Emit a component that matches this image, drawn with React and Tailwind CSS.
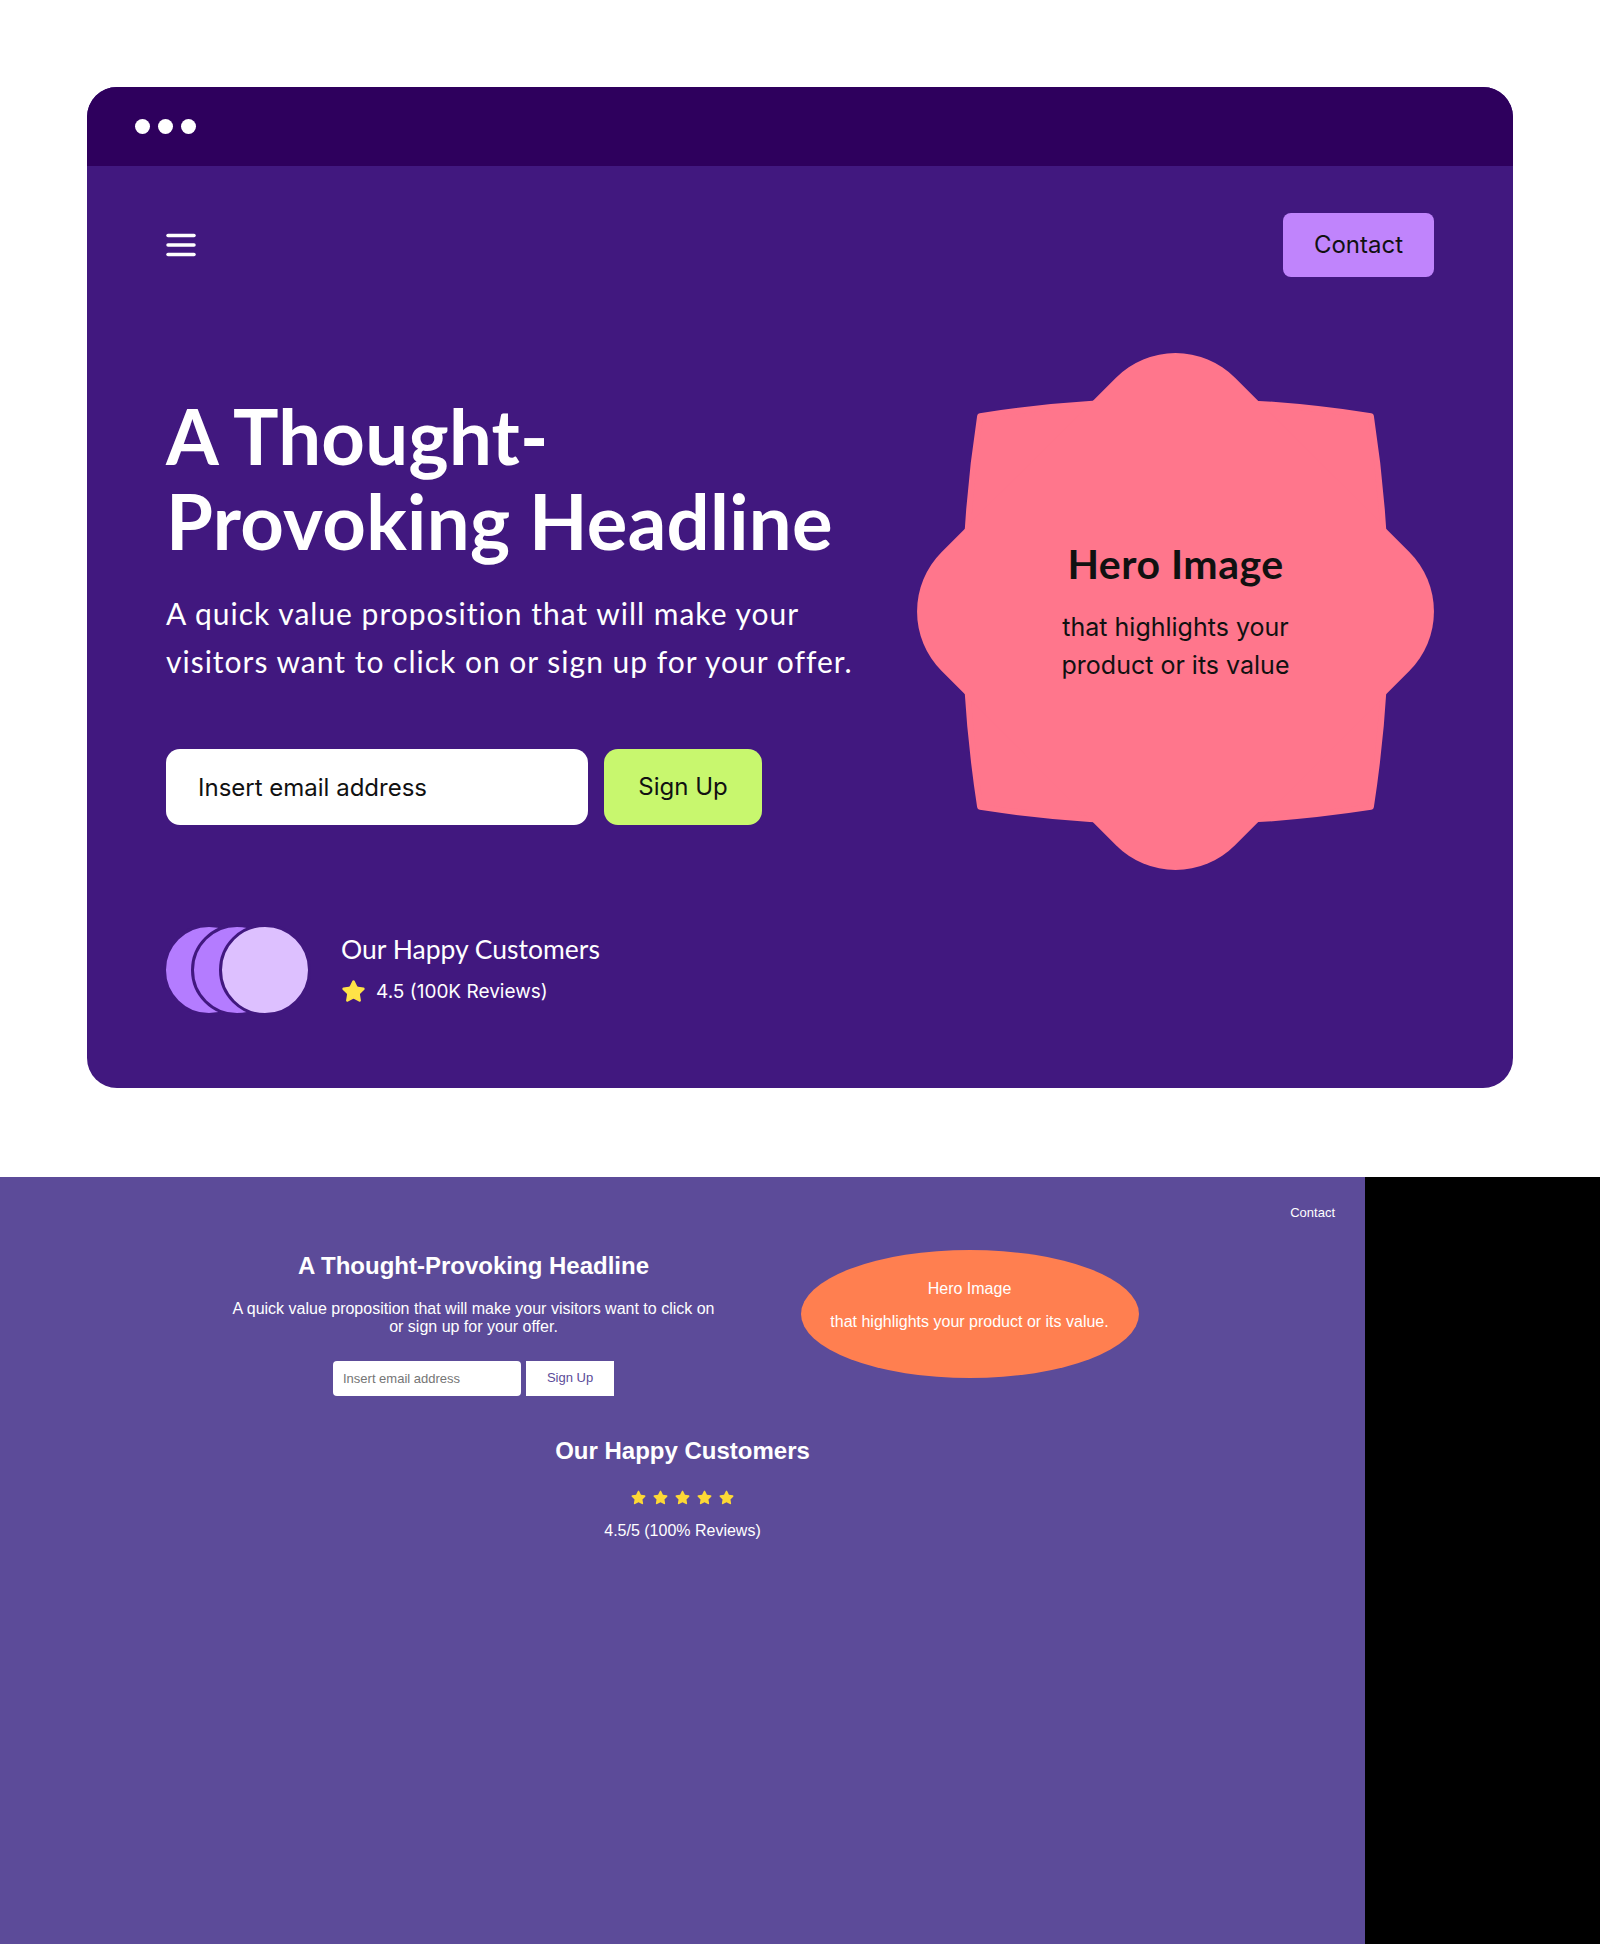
import { Star } from "lucide-react";
import { FaStar } from "react-icons/fa";

const lato = "font-[family-name:Lato,sans-serif]";
const inter = "font-[family-name:Inter,sans-serif]";
const arial = "font-[family-name:'Liberation_Sans',Arial,sans-serif]";

function Flower() {
  return (
    <div className="relative w-[517px] h-[517px] shrink-0">
      <svg viewBox="-258 -258 516 516" className="w-full h-full">
        <path
          d="M -195 -195 Q 0 -225 195 -195 Q 225 0 195 195 Q 0 225 -195 195 Q -225 0 -195 -195 Z"
          fill="#FF768C"
          stroke="#FF768C"
          strokeWidth="6"
          strokeLinejoin="round"
        />
        <rect x="-207" y="-207" width="414" height="414" rx="84" transform="rotate(45)" fill="#FF768C" />
      </svg>
      {/* label on top of the shape */}
      <div className="absolute inset-0 flex flex-col items-center justify-center text-center text-[#111]">
        <h2 className={`${lato} text-[41px] font-bold leading-[1.2] tracking-[0.5px]`}>Hero Image</h2>
        <p className={`${inter} text-[25px] leading-[38px] mt-[19px]`}>
          that highlights your
          <br />
          product or its value
        </p>
      </div>
    </div>
  );
}

function Mockup() {
  return (
    <div className="bg-white px-[87px] pt-[87px] pb-[89px]">
      <div className="rounded-[30px] overflow-hidden bg-[#41187F]">
        {/* window bar */}
        <div className="h-[79px] bg-[#2E005D] flex items-center pl-[48px] gap-[8px]">
          <span className="w-[15px] h-[15px] rounded-full bg-white" />
          <span className="w-[15px] h-[15px] rounded-full bg-white" />
          <span className="w-[15px] h-[15px] rounded-full bg-white" />
        </div>

        <div className="px-[79px] pt-[47px] pb-[72px]">
          {/* nav */}
          <div className="flex items-center justify-between">
            <svg width="30" height="24" viewBox="0 0 30 24">
              <line x1="2" y1="2.5" x2="28" y2="2.5" stroke="white" strokeWidth="3.5" strokeLinecap="round" />
              <line x1="2" y1="12" x2="28" y2="12" stroke="white" strokeWidth="3.5" strokeLinecap="round" />
              <line x1="2" y1="21.5" x2="28" y2="21.5" stroke="white" strokeWidth="3.5" strokeLinecap="round" />
            </svg>
            <button className={`${inter} w-[151px] h-[64px] rounded-[8px] bg-[#C084FC] text-[24px] text-[#111]`}>
              Contact
            </button>
          </div>

          {/* hero */}
          <div className="mt-[76px] flex items-start justify-between">
            <div className="flex-1 pt-[40px]">
              <h1 className={`${lato} text-[76px] leading-[85px] font-bold tracking-[0.3px] text-white`}>
                A Thought-
                <br />
                Provoking Headline
              </h1>
              <p className={`${lato} mt-[26px] text-[30px] leading-[48px] font-normal tracking-[1px] text-white`}>
                A quick value proposition that will make your
                <br />
                visitors want to click on or sign up for your offer.
              </p>
              <form className="mt-[64px] flex gap-[16px]" onSubmit={(e) => e.preventDefault()}>
                <input
                  type="email"
                  placeholder="Insert email address"
                  className={`${inter} w-[422px] h-[76px] rounded-[14px] bg-white px-[32px] text-[24px] text-[#111] placeholder:text-[#111] outline-none`}
                />
                <button className={`${inter} w-[158px] h-[76px] rounded-[14px] bg-[#C8F76E] text-[24px] text-[#111]`}>
                  Sign Up
                </button>
              </form>
            </div>
            <Flower />
          </div>

          {/* social proof */}
          <div className="mt-[54px] flex items-center gap-[30px]">
            <div className="flex -ml-[3px]">
              <span className="w-[92px] h-[92px] rounded-full bg-[#B47CFF] border-[3px] border-[#41187F]" />
              <span className="w-[92px] h-[92px] rounded-full bg-[#B47CFF] border-[3px] border-[#41187F] -ml-[64px]" />
              <span className="w-[92px] h-[92px] rounded-full bg-[#DDC0FF] border-[3px] border-[#41187F] -ml-[64px]" />
            </div>
            <div>
              <p className={`${lato} text-[26.5px] leading-[1.2] font-normal text-white`}>Our Happy Customers</p>
              <div className="mt-[12px] flex items-center gap-[10px]">
                <Star size={25} fill="#FFE347" color="#FFE347" strokeWidth={1.5} />
                <span className={`${inter} text-[19px] text-white`}>4.5 (100K Reviews)</span>
              </div>
            </div>
          </div>
        </div>
      </div>
    </div>
  );
}

function LiveSection() {
  return (
    <div className={`${arial} flex h-[767px] leading-[1.15]`}>
      <div className="w-[1365px] bg-[#5C4B99] text-white">
        <div className="flex justify-end pr-[30px] pt-[29px]">
          <a className="text-[13px] leading-[1.15]">Contact</a>
        </div>

        <div className="mt-[29px] flex justify-center items-start gap-[80px]">
          <div className="w-[494px] pt-[2px] text-center">
            <h2 className="text-[24px] leading-[1.15] font-bold">A Thought-Provoking Headline</h2>
            <p className="mt-[20px] text-[16px] leading-[1.15]">
              A quick value proposition that will make your visitors want to click on or sign up for your offer.
            </p>
            <div className="mt-[25px] flex justify-center gap-[5px]">
              <input
                type="email"
                placeholder="Insert email address"
                className="w-[188px] h-[35px] rounded-[4px] bg-white px-[10px] text-[13px] text-[#333] placeholder:text-[#757575] outline-none"
              />
              <button className="w-[88px] h-[35px] bg-white text-[13px] text-[#5C4B99]">Sign Up</button>
            </div>
          </div>
          <div className="w-[338px] h-[128px] rounded-[50%] bg-[#FF7F50] flex flex-col items-center justify-center pb-[17px] text-[16px] leading-[1.15]">
            <p>Hero Image</p>
            <p className="mt-[15px]">that highlights your product or its value.</p>
          </div>
        </div>

        <div className="mt-[41px] text-center">
          <h3 className="text-[24px] leading-[1.15] font-bold">Our Happy Customers</h3>
          <div className="mt-[25px] flex justify-center gap-[7px] text-[#FDD835]">
            <FaStar size={15} />
            <FaStar size={15} />
            <FaStar size={15} />
            <FaStar size={15} />
            <FaStar size={15} />
          </div>
          <p className="mt-[17px] text-[16px] leading-[1.15]">4.5/5 (100% Reviews)</p>
        </div>
      </div>
      <div className="flex-1 bg-black" />
    </div>
  );
}

export default function App() {
  return (
    <main className="w-[1600px] bg-white">
      <Mockup />
      <LiveSection />
    </main>
  );
}
